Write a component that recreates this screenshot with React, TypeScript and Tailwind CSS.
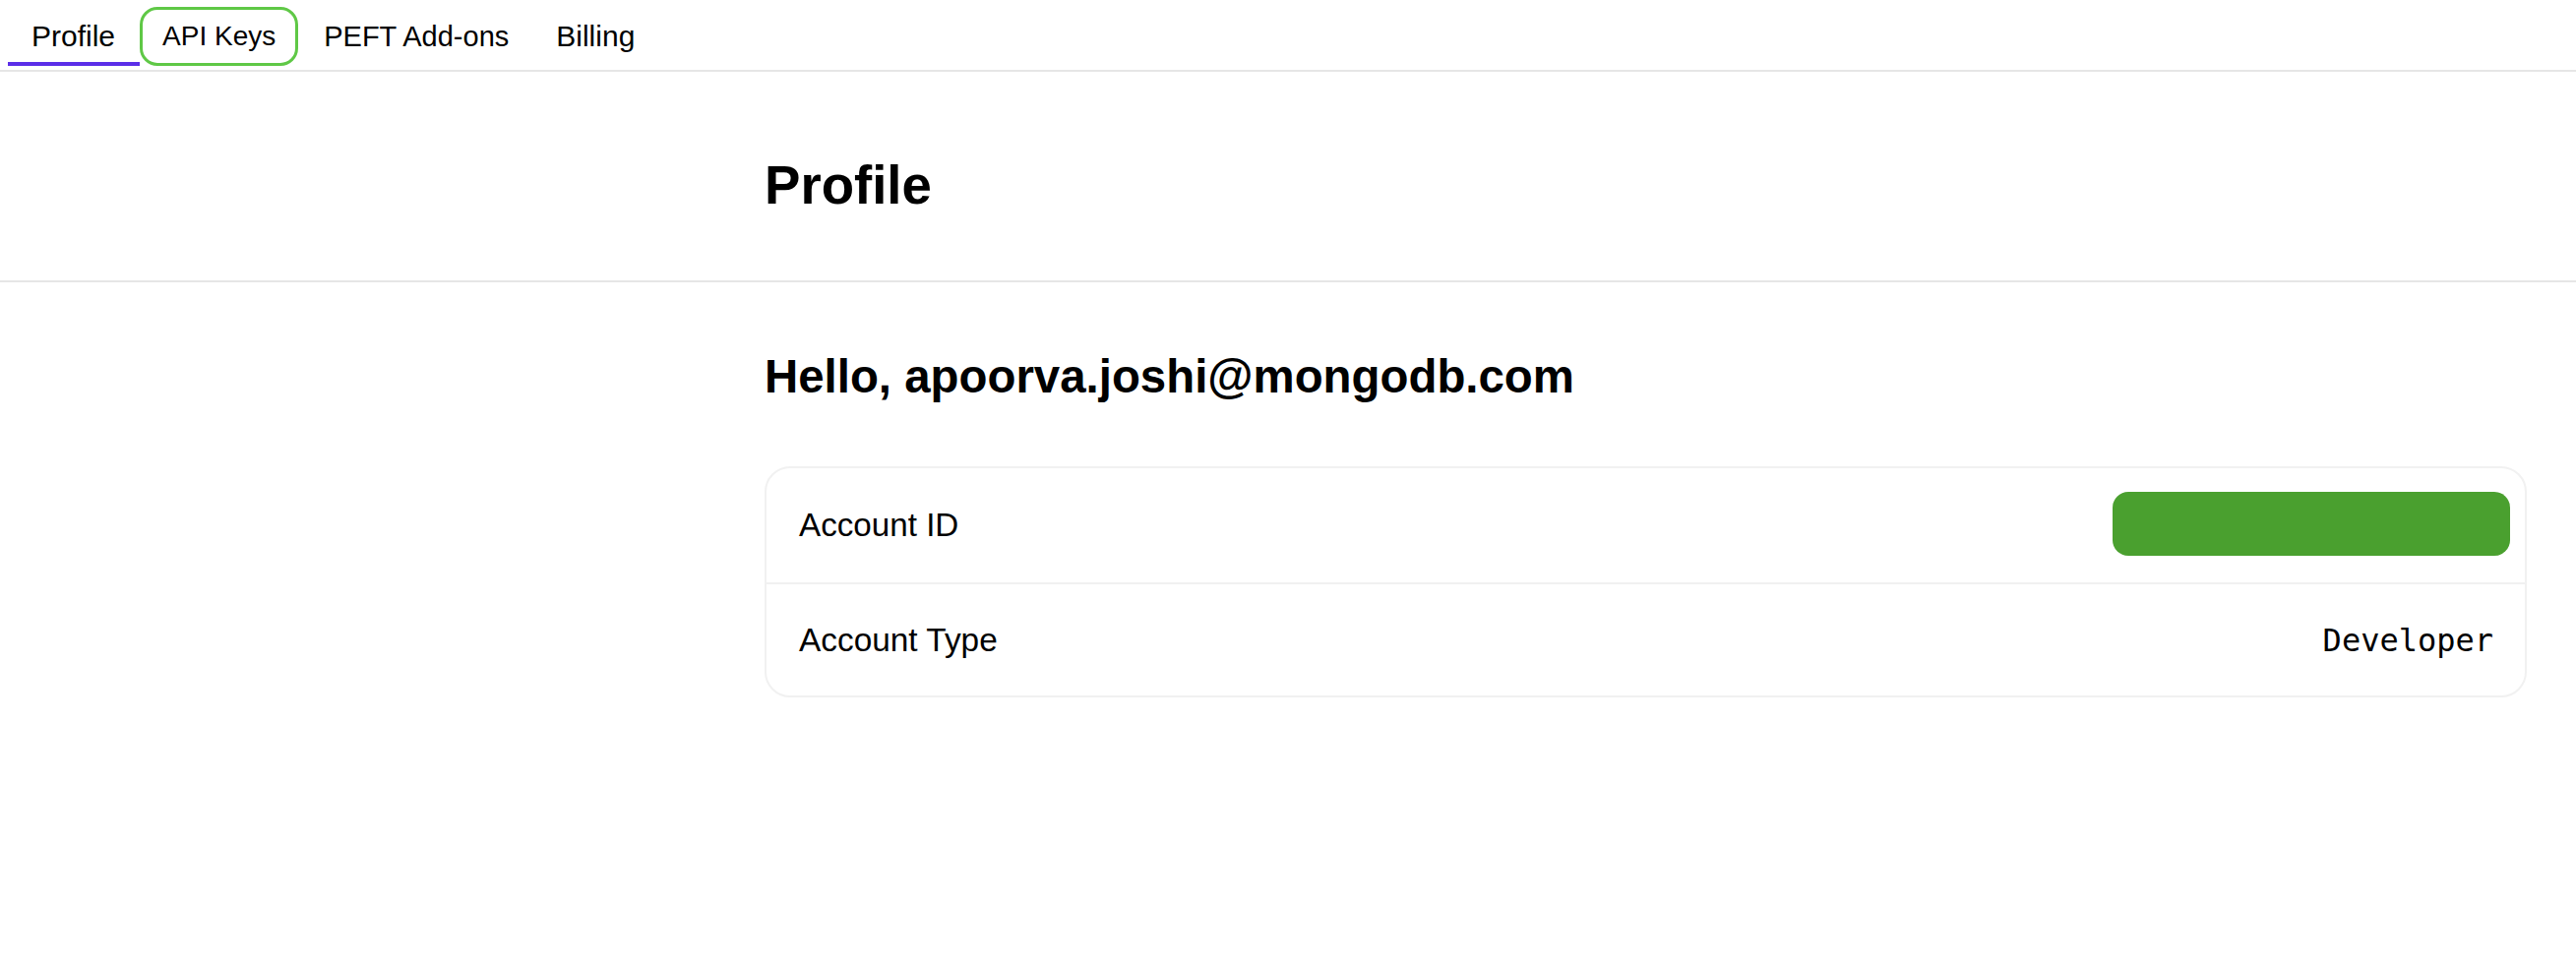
import React from "react";

const tabs = ["Profile", "API Keys", "PEFT Add-ons", "Billing"];

export default function App() {
  return (
    <div className="min-h-[980px] w-full bg-white text-black" style={{ fontFamily: '"Liberation Sans", Arial, sans-serif' }}>
      <nav className="flex items-end pt-[7px] pl-[8px] pb-[4px] border-b-2 border-[#e6e6e6]">
        {tabs.map((t, i) => {
          if (i === 0) {
            return (
              <div key={t} className="h-[60px] pl-[24px] pr-[25px] flex items-center border-b-4 border-[#5b2ee8] text-[30px] leading-none">
                <span className="pt-[4px]">{t}</span>
              </div>
            );
          }
          if (i === 1) {
            return (
              <div key={t} className="h-[60px] px-[20px] flex items-center border-[3px] border-[#5fc846] rounded-[18px] text-[28px] leading-none">
                {t}
              </div>
            );
          }
          return (
            <div key={t} className={"h-[60px] flex items-center leading-none " + (i === 3 ? "text-[30px] px-[24px]" : "text-[29px] pl-[26px] pr-[24px]")}>
              {t}
            </div>
          );
        })}
      </nav>

      <header className="pl-[777px] pt-[89px] pb-[68px] border-b-2 border-[#e6e6e6]">
        <h1 className="text-[54.6px] leading-none font-bold">Profile</h1>
      </header>

      <main className="pl-[777px] pr-[50px] pt-[72px]">
        <h2 className="text-[47.4px] leading-none font-bold">Hello, apoorva.joshi@mongodb.com</h2>

        <div className="mt-[68px] border-2 border-[#f1f1f1] rounded-[26px] overflow-hidden">
          <div className="h-[116px] flex items-center justify-between pl-[33px] pr-[15px]">
            <span className="text-[33.2px] leading-none">Account ID</span>
            <div className="w-[404px] h-[65px] rounded-[16px] bg-[#4aa02f] mt-[-4px]" />
          </div>
          <div className="h-[115px] flex items-center justify-between pl-[33px] pr-[32px] border-t-2 border-[#f1f1f1]">
            <span className="text-[33.4px] leading-none">Account Type</span>
            <span className="text-[32px] leading-none" style={{ fontFamily: '"DejaVu Sans Mono", monospace' }}>
              Developer
            </span>
          </div>
        </div>
      </main>
    </div>
  );
}
